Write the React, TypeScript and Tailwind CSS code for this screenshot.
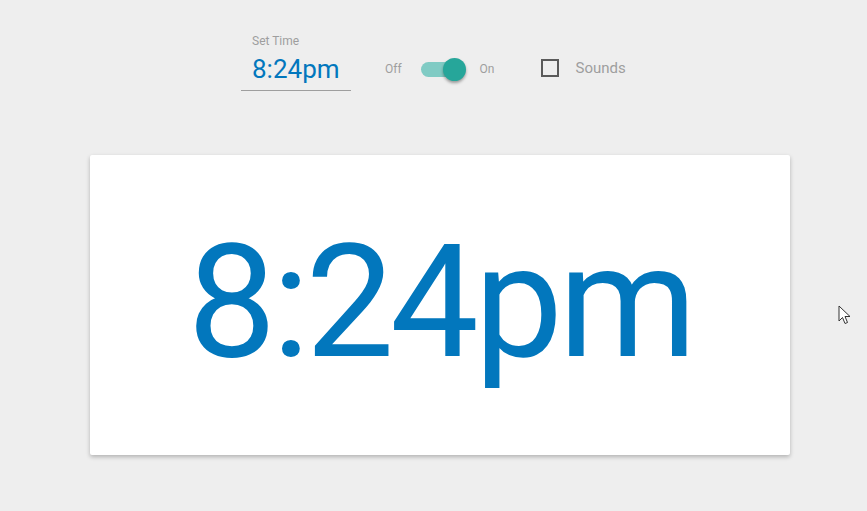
import { useState } from "react";

function App() {
  const [time, setTime] = useState("8:24pm");
  const [on, setOn] = useState(true);
  const [sounds, setSounds] = useState(false);

  return (
    <div className="relative h-[511px] w-full overflow-hidden bg-[#eeeeee] font-['Roboto',sans-serif]">
      {/* controls row */}
      <div className="flex items-start pl-[241px] pt-[34px]">
        <div className="flex w-[110px] flex-col border-b border-[#9e9e9e]">
          <span className="pl-[11px] text-[12px] leading-[14px] text-[#9e9e9e]">Set Time</span>
          <input
            value={time}
            onChange={(e) => setTime(e.target.value)}
            className="h-[42px] w-full bg-transparent pl-[11px] text-[26px] text-[#0277bd] outline-none"
          />
        </div>

        <div className="ml-[34px] mt-[26px] flex items-center">
          <span className="text-[12px] text-[#9e9e9e]">Off</span>
          <button
            onClick={() => setOn((v) => !v)}
            className="relative ml-[19px] h-[15px] w-[42px] rounded-full bg-[#80cbc4]"
          >
            <span
              className={`absolute top-[-4px] h-[23px] w-[23px] rounded-full bg-[#26a69a] shadow-[0_2px_3px_rgba(0,0,0,0.35)] ${
                on ? "left-[22px]" : "left-[-2px]"
              }`}
            />
          </button>
          <span className="ml-[17px] text-[12px] text-[#9e9e9e]">On</span>
        </div>

        <label className="ml-[46px] mt-[23px] flex cursor-pointer items-center">
          <span
            onClick={() => setSounds((v) => !v)}
            className={`h-[18px] w-[18px] border-2 border-[#5a5a5a] ${sounds ? "bg-[#26a69a]" : ""}`}
          />
          <span className="ml-[17px] text-[15px] text-[#9e9e9e]">Sounds</span>
        </label>
      </div>

      {/* clock card */}
      <div className="mx-[90px] mt-[64px] flex h-[300px] w-[700px] items-center justify-center rounded-[2px] bg-white shadow-[0_2px_4px_rgba(0,0,0,0.25)]">
        <span className="pb-[6px] text-[158px] leading-none tracking-[-4.5px] text-[#0277bd]">{time}</span>
      </div>

      {/* mouse pointer */}
      <svg className="absolute left-[838px] top-[305px]" width="14" height="22" viewBox="0 0 14 22">
        <path
          d="M1 1 L1 16 L4.5 12.5 L7 18.5 L9.5 17.5 L7 11.5 L12 11.5 Z"
          fill="white"
          stroke="#333"
          strokeWidth="1"
          strokeLinejoin="round"
        />
      </svg>
    </div>
  );
}

export default App;
